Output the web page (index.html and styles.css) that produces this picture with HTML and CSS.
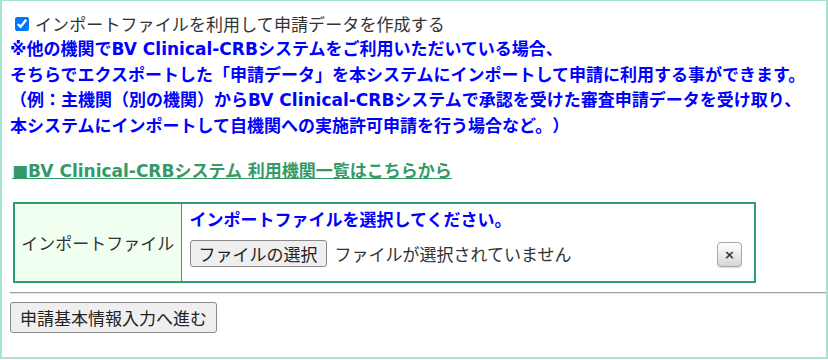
FILE: index.html
```html
<!DOCTYPE html>
<html lang="ja">
<head>
<meta charset="utf-8">
<link rel="stylesheet" href="styles.css">
</head>
<body>
<div class="page">
  <label class="opt"><input type="checkbox" class="chk" checked> インポートファイルを利用して申請データを作成する</label>
  <p class="note">※他の機関でBV Clinical-CRBシステムをご利用いただいている場合、<br>そちらでエクスポートした「申請データ」を本システムにインポートして申請に利用する事ができます。<br>（例：主機関（別の機関）からBV Clinical-CRBシステムで承認を受けた審査申請データを受け取り、<br>本システムにインポートして自機関への実施許可申請を行う場合など。）</p>
  <a class="link" href="#">■BV Clinical-CRBシステム 利用機関一覧はこちらから</a>
  <table class="imp">
    <tr>
      <th class="lbl">インポートファイル</th>
      <td class="val">
        <div class="msg">インポートファイルを選択してください。</div>
        <div class="filerow">
          <span class="filebtn">ファイルの選択</span>
          <span class="fname">ファイルが選択されていません</span>
          <span class="clear">×</span>
        </div>
      </td>
    </tr>
  </table>
  <div class="rule"></div>
  <button class="next" type="button">申請基本情報入力へ進む</button>
</div>
</body>
</html>
```
FILE: styles.css
```css
html, body {
  margin: 0;
  padding: 0;
  background: #fff;
}
body {
  font-family: "DejaVu Sans", "Noto Sans CJK JP", sans-serif;
  font-size: 17px;
  color: #333;
  text-spacing-trim: space-all;
}
.page {
  box-sizing: border-box;
  width: 828px;
  height: 359px;
  border: 2px solid #a6e4cd;
  border-top-width: 1px;
  padding: 9px 0 0 8px;
}
.opt {
  display: flex;
  align-items: center;
  height: 27px;
  line-height: 27px;
  font-family: "Noto Sans CJK JP", sans-serif;
  color: #333;
  letter-spacing: 0.1px;
}
.chk {
  width: 14px;
  height: 14px;
  margin: 1px 6px 0 5px;
  accent-color: #0075ff;
}
.note {
  margin: 0;
  line-height: 25.5px;
  color: #0000ff;
  font-weight: bold;
  white-space: nowrap;
}
.link {
  display: inline-block;
  margin-top: 20px;
  line-height: 25px;
  color: #339966;
  font-weight: bold;
  text-decoration: underline;
  padding-left: 2px;
}
.imp {
  margin-top: 18px;
  margin-left: 3px;
  width: 743px;
  border-collapse: collapse;
  border: 2px solid #2f9e6f;
}
.lbl {
  width: 167px;
  box-sizing: border-box;
  background: #f0fff0;
  border-right: 1px solid #2f9e6f;
  font-weight: normal;
  font-family: "Noto Sans CJK JP", sans-serif;
  color: #333;
  text-align: center;
  padding: 0;
  line-height: 24px;
}
.val {
  padding: 3px 12px 14px 8px;
  vertical-align: top;
}
.msg {
  line-height: 24px;
  color: #0000ff;
  font-weight: bold;
  font-family: "Noto Sans CJK JP", sans-serif;
}
.filerow {
  display: flex;
  align-items: center;
  margin-top: 9px;
  height: 27px;
}
.filebtn {
  box-sizing: border-box;
  height: 27px;
  line-height: 25px;
  padding: 0 8px;
  border: 1px solid #8a8a8a;
  border-radius: 3px;
  background: #efefef;
  color: #222;
  font-family: "Noto Sans CJK JP", sans-serif;
}
.fname {
  margin-left: 8px;
  color: #333;
  font-family: "Noto Sans CJK JP", sans-serif;
  line-height: 27px;
}
.clear {
  margin-left: auto;
  box-sizing: border-box;
  width: 25px;
  height: 25px;
  margin-top: 2px;
  border: 1px solid #a8a8a8;
  border-radius: 4px;
  background: linear-gradient(#ffffff, #d6d6d6);
  box-shadow: 0 1px 1px rgba(0,0,0,0.15);
  display: flex;
  align-items: center;
  justify-content: center;
  font-size: 13px;
  font-weight: bold;
  color: #333;
}
.rule {
  margin-top: 9px;
  border-top: 1px solid #a0a0a0;
  border-bottom: 1px solid #e4e4e4;
}
.next {
  margin-top: 8px;
  height: 31px;
  box-sizing: border-box;
  padding: 0 9px;
  border: 1px solid #8a8a8a;
  border-radius: 3px;
  background: #efefef;
  color: #222;
  font-family: "Noto Sans CJK JP", sans-serif;
  font-size: 17px;
  line-height: 29px;
}
```
